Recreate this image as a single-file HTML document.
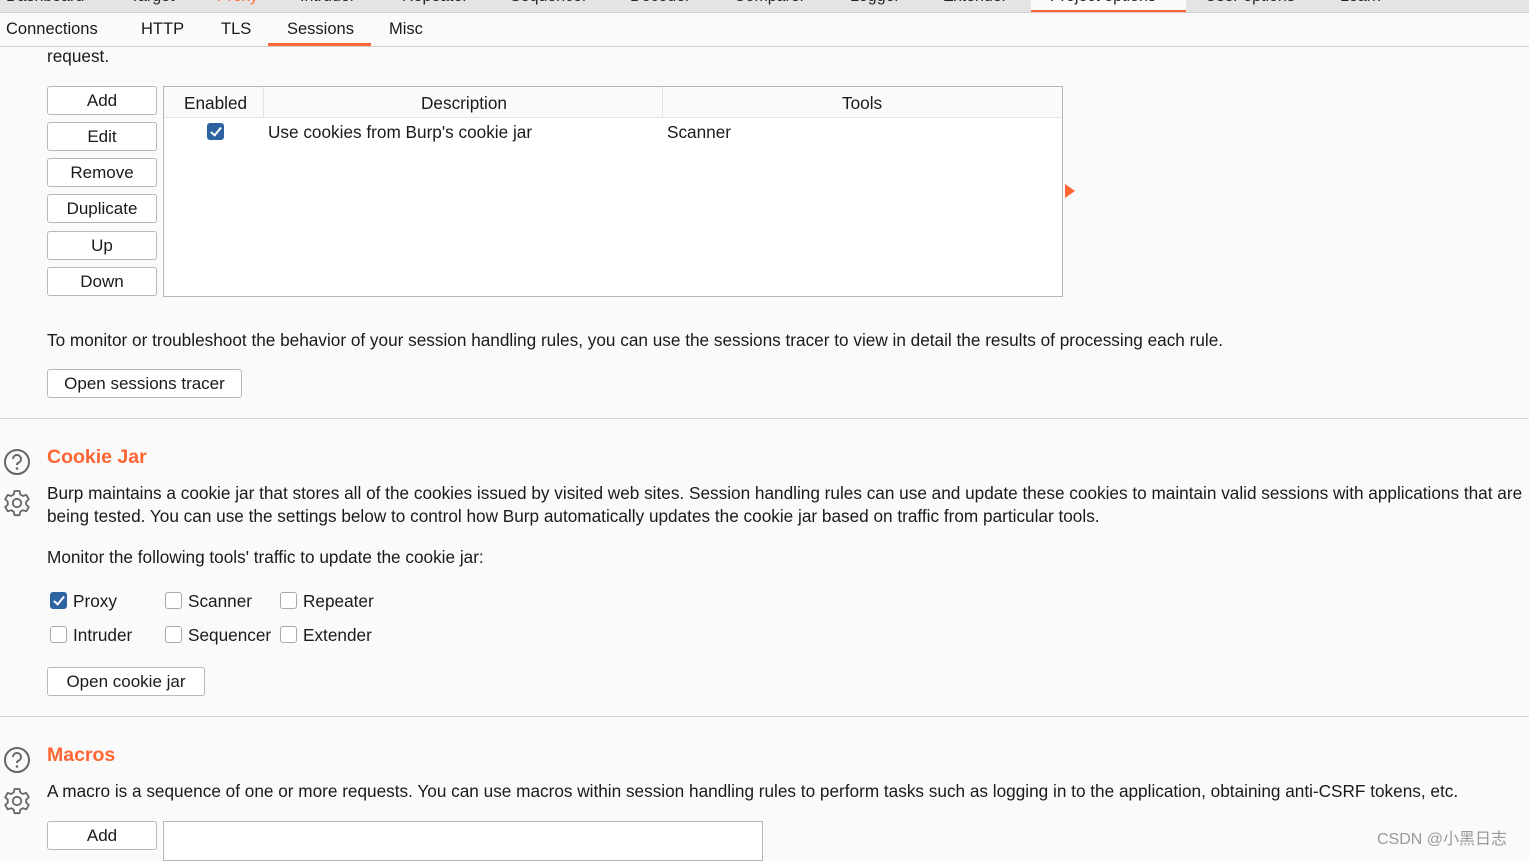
<!DOCTYPE html>
<html><head><meta charset="utf-8"><style>
*{margin:0;padding:0;box-sizing:border-box}
body{width:1529px;height:853px;overflow:hidden;background:#fafafa;font-family:"Liberation Sans","Noto Sans CJK SC",sans-serif;font-size:17.2px;color:#1a1a1a;position:relative}
.a{position:absolute;white-space:nowrap}
.top{position:absolute;left:0;top:0;width:1529px;height:13px;background:#e4e4e4;border-bottom:1px solid #d0d0d0;overflow:hidden}
.top span{position:absolute;top:-12px;font-size:16px;color:#222}
.btn{position:absolute;border:1px solid #b8b8b8;border-radius:3px;background:#fff;text-align:center;font-size:17px;line-height:27px;height:29px}
.cb{position:absolute;width:17px;height:17px;border:1px solid #aaa;border-radius:3px;background:#fff}
.cb.on{background:#2d63a0;border-color:#2d63a0}
.cb.on:after{content:"";position:absolute;left:5px;top:1px;width:4px;height:9px;border:solid #fff;border-width:0 2px 2px 0;transform:rotate(40deg)}
.h{color:#ff6633;font-weight:bold;font-size:19.5px}
.sep{position:absolute;left:0;width:1529px;height:1px;background:#d6d6d6}
</style></head><body>
<div class="top">
<span style="left:6px">Dashboard</span><span style="left:130px">Target</span><span style="left:217px;color:#ff6633">Proxy</span><span style="left:300px">Intruder</span><span style="left:402px">Repeater</span><span style="left:510px">Sequencer</span><span style="left:630px">Decoder</span><span style="left:734px">Comparer</span><span style="left:850px">Logger</span><span style="left:943px">Extender</span>
<div style="position:absolute;left:1031px;top:0;width:155px;height:13px;background:#fafafa;border-bottom:3px solid #ff6633"></div>
<span style="left:1050px">Project options</span><span style="left:1205px">User options</span><span style="left:1340px">Learn</span>
</div>
<div style="position:absolute;left:0;top:14px;width:1529px;height:33px;background:#fafafa;border-bottom:1px solid #cfcfcf"></div>
<div class="a" style="left:6px;top:20px;font-size:16.5px">Connections</div>
<div class="a" style="left:141px;top:20px;font-size:16.5px">HTTP</div>
<div class="a" style="left:221px;top:20px;font-size:16.5px">TLS</div>
<div class="a" style="left:287px;top:20px;font-size:16.5px">Sessions</div>
<div style="position:absolute;left:268px;top:43px;width:103px;height:3px;background:#ff6633"></div>
<div class="a" style="left:389px;top:20px;font-size:16.5px">Misc</div>

<div class="a" style="left:47px;top:46px">request.</div>
<div class="btn" style="left:47px;top:86px;width:110px">Add</div>
<div class="btn" style="left:47px;top:122px;width:110px">Edit</div>
<div class="btn" style="left:47px;top:158px;width:110px">Remove</div>
<div class="btn" style="left:47px;top:194px;width:110px">Duplicate</div>
<div class="btn" style="left:47px;top:231px;width:110px">Up</div>
<div class="btn" style="left:47px;top:267px;width:110px">Down</div>

<div style="position:absolute;left:163px;top:86px;width:900px;height:211px;border:1px solid #b8b4b8;background:#fff"></div>
<div style="position:absolute;left:164px;top:87px;width:898px;height:31px;background:#fafafa;border-bottom:1px solid #e4e4e4"></div>
<div style="position:absolute;left:263px;top:87px;width:1px;height:31px;background:#e4e4e4"></div>
<div style="position:absolute;left:662px;top:87px;width:1px;height:31px;background:#e4e4e4"></div>
<div class="a" style="left:184px;top:93px">Enabled</div>
<div class="a" style="left:421px;top:93px">Description</div>
<div class="a" style="left:842px;top:93px">Tools</div>
<div class="cb on" style="left:207px;top:123px"></div>
<div class="a" style="left:268px;top:122px">Use cookies from Burp's cookie jar</div>
<div class="a" style="left:667px;top:122px">Scanner</div>
<div style="position:absolute;left:1065px;top:184px;width:0;height:0;border-left:10px solid #ff6633;border-top:7px solid transparent;border-bottom:7px solid transparent"></div>

<div class="a" style="left:47px;top:330px">To monitor or troubleshoot the behavior of your session handling rules, you can use the sessions tracer to view in detail the results of processing each rule.</div>
<div class="btn" style="left:47px;top:369px;width:195px">Open sessions tracer</div>
<div class="sep" style="top:418px"></div>

<svg class="a" style="left:3px;top:448px" width="28" height="28" viewBox="0 0 28 28"><circle cx="14" cy="14" r="12" fill="none" stroke="#666" stroke-width="2"/><path d="M10 11a4 4 0 1 1 5.5 3.7c-1 .5-1.5 1.2-1.5 2.3" fill="none" stroke="#666" stroke-width="2"/><circle cx="14" cy="20.5" r="1.3" fill="#666"/></svg>
<svg class="a" style="left:2px;top:488px" width="30" height="30" viewBox="0 0 30 30"><path d="M12.5 3h5l.8 3.5 2.6 1.5 3.4-1.1 2.5 4.3-2.6 2.4v3l2.6 2.4-2.5 4.3-3.4-1.1-2.6 1.5-.8 3.5h-5l-.8-3.5-2.6-1.5-3.4 1.1-2.5-4.3 2.6-2.4v-3L3.2 11.2l2.5-4.3 3.4 1.1 2.6-1.5z" fill="none" stroke="#666" stroke-width="1.8" stroke-linejoin="round"/><circle cx="15" cy="15" r="4.2" fill="none" stroke="#666" stroke-width="1.8"/></svg>
<div class="a h" style="left:47px;top:446px">Cookie Jar</div>
<div class="a" style="left:47px;top:483px">Burp maintains a cookie jar that stores all of the cookies issued by visited web sites. Session handling rules can use and update these cookies to maintain valid sessions with applications that are</div>
<div class="a" style="left:47px;top:506px">being tested. You can use the settings below to control how Burp automatically updates the cookie jar based on traffic from particular tools.</div>
<div class="a" style="left:47px;top:547px">Monitor the following tools' traffic to update the cookie jar:</div>
<div class="cb on" style="left:50px;top:592px"></div><div class="a" style="left:73px;top:591px">Proxy</div>
<div class="cb" style="left:165px;top:592px"></div><div class="a" style="left:188px;top:591px">Scanner</div>
<div class="cb" style="left:280px;top:592px"></div><div class="a" style="left:303px;top:591px">Repeater</div>
<div class="cb" style="left:50px;top:626px"></div><div class="a" style="left:73px;top:625px">Intruder</div>
<div class="cb" style="left:165px;top:626px"></div><div class="a" style="left:188px;top:625px">Sequencer</div>
<div class="cb" style="left:280px;top:626px"></div><div class="a" style="left:303px;top:625px">Extender</div>
<div class="btn" style="left:47px;top:667px;width:158px">Open cookie jar</div>
<div class="sep" style="top:716px"></div>

<svg class="a" style="left:3px;top:746px" width="28" height="28" viewBox="0 0 28 28"><circle cx="14" cy="14" r="12" fill="none" stroke="#666" stroke-width="2"/><path d="M10 11a4 4 0 1 1 5.5 3.7c-1 .5-1.5 1.2-1.5 2.3" fill="none" stroke="#666" stroke-width="2"/><circle cx="14" cy="20.5" r="1.3" fill="#666"/></svg>
<svg class="a" style="left:2px;top:786px" width="30" height="30" viewBox="0 0 30 30"><path d="M12.5 3h5l.8 3.5 2.6 1.5 3.4-1.1 2.5 4.3-2.6 2.4v3l2.6 2.4-2.5 4.3-3.4-1.1-2.6 1.5-.8 3.5h-5l-.8-3.5-2.6-1.5-3.4 1.1-2.5-4.3 2.6-2.4v-3L3.2 11.2l2.5-4.3 3.4 1.1 2.6-1.5z" fill="none" stroke="#666" stroke-width="1.8" stroke-linejoin="round"/><circle cx="15" cy="15" r="4.2" fill="none" stroke="#666" stroke-width="1.8"/></svg>
<div class="a h" style="left:47px;top:744px">Macros</div>
<div class="a" style="left:47px;top:781px">A macro is a sequence of one or more requests. You can use macros within session handling rules to perform tasks such as logging in to the application, obtaining anti-CSRF tokens, etc.</div>
<div class="btn" style="left:47px;top:821px;width:110px">Add</div>
<div style="position:absolute;left:163px;top:821px;width:600px;height:40px;border:1px solid #b8b4b8;background:#fff"></div>
<div class="a" style="left:1377px;top:825px;color:#999;font-size:16px">CSDN @小黑日志</div>
</body></html>
